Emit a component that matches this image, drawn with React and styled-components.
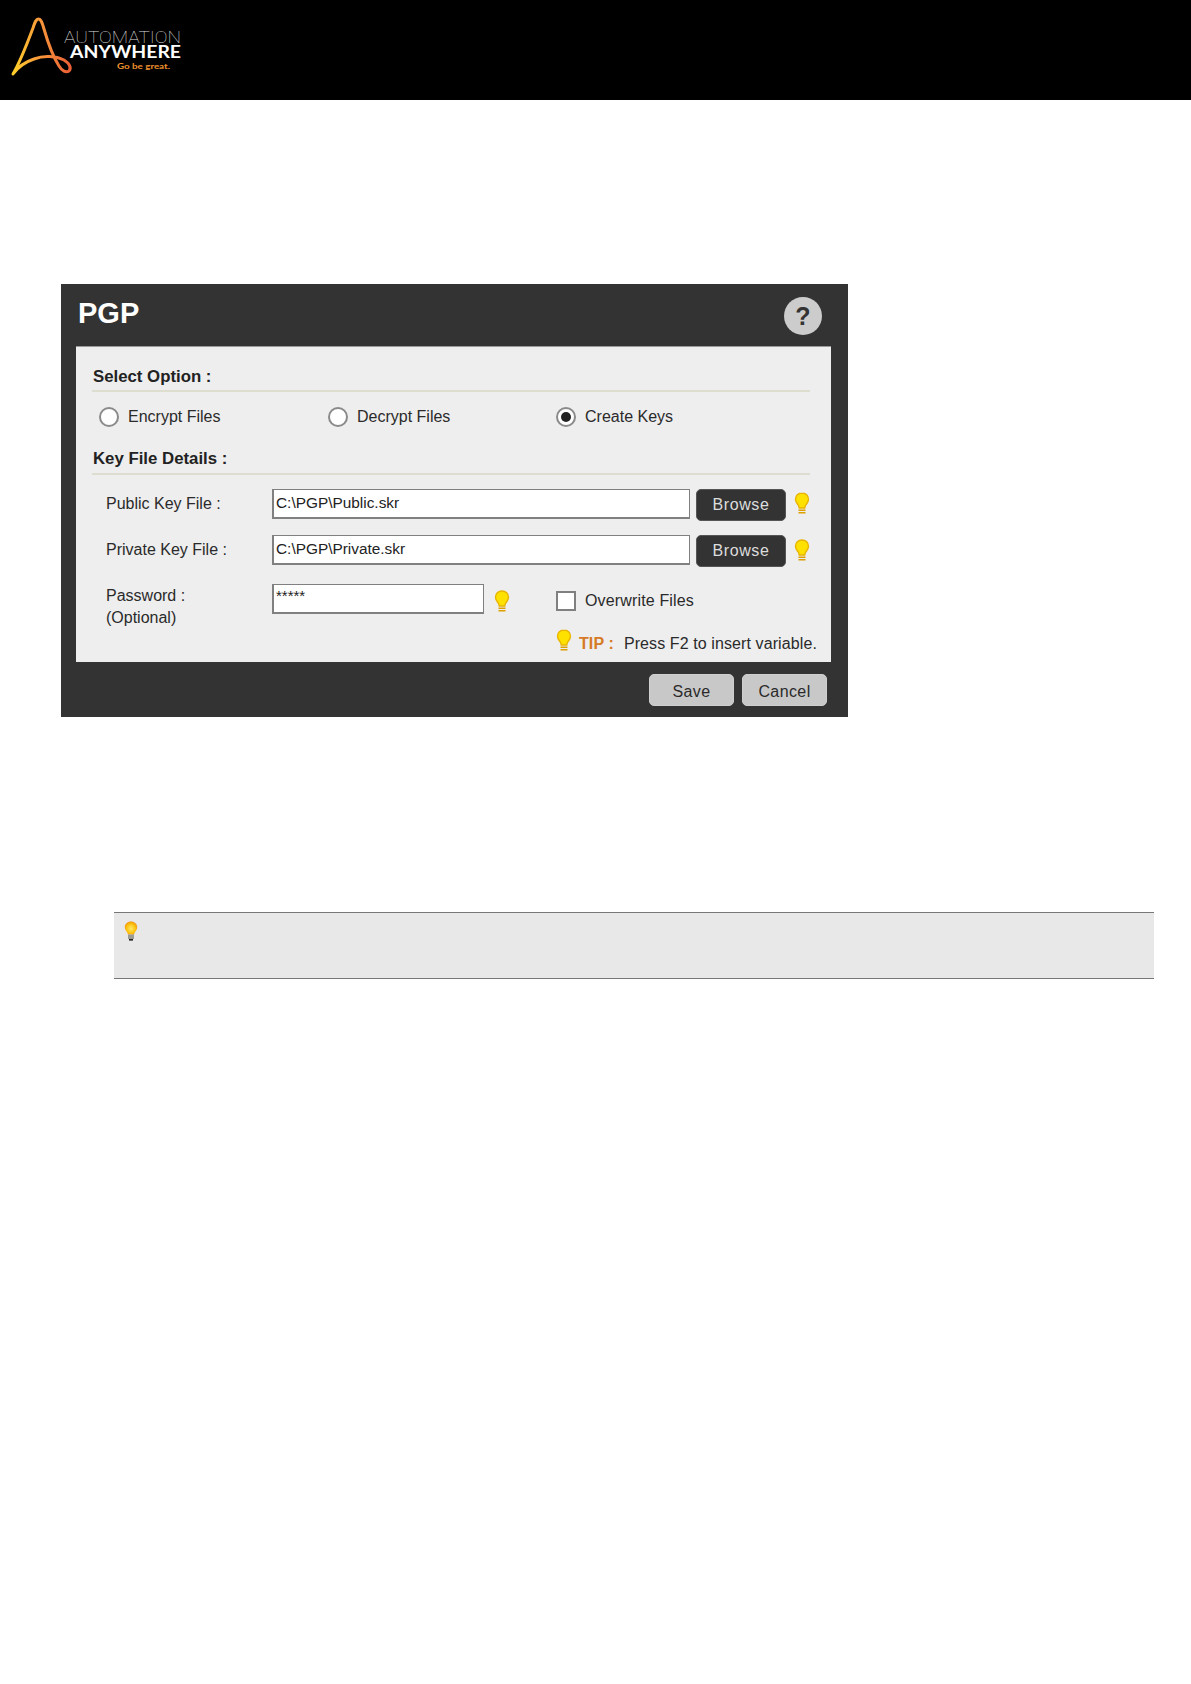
import React from 'react';
import styled, { createGlobalStyle } from 'styled-components';

const GlobalStyle = createGlobalStyle`
  body {
    margin: 0;
    background: #ffffff;
    font-family: 'Liberation Sans', Arial, sans-serif;
  }
`;

const Page = styled.div`
  min-height: 1684px;
`;

const TopBar = styled.header`
  height: 100px;
  background: #000000;
`;

const Logo = styled.svg`
  display: block;
`;

// dialog screenshot
const Dialog = styled.section`
  width: 787px;
  height: 433px;
  margin: 184px 0 0 61px;
  background: #333333;
  display: flex;
  flex-direction: column;
`;

const TitleBar = styled.div`
  height: 62px;
  flex: none;
  display: flex;
  justify-content: space-between;
  padding: 11px 26px 0 17px;
  box-sizing: border-box;
`;

const Title = styled.h1`
  margin: 0;
  font-size: 29px;
  line-height: 36px;
  font-weight: bold;
  color: #ffffff;
`;

const HelpButton = styled.div`
  width: 38px;
  height: 38px;
  margin-top: 2px;
  border-radius: 50%;
  background: #cccccc;
  color: #333333;
  font-size: 25px;
  font-weight: bold;
  line-height: 38px;
  text-align: center;
`;

const Panel = styled.div`
  width: 755px;
  height: 316px;
  flex: none;
  margin-left: 15px;
  padding: 20px 21px 0 16px;
  box-sizing: border-box;
  background: #eeeeee;
  border-top: 1px solid #999999;
  color: #2a2a2a;
  font-size: 16px;
`;

const SectionTitle = styled.h2`
  margin: ${(props) => props.$top || 0}px 0 0;
  padding: 0 0 ${(props) => props.$bottom}px 1px;
  font-size: 16.800px;
  line-height: 20px;
  font-weight: bold;
  color: #222222;
  border-bottom: 2px solid #deded0;
`;

const OptionRow = styled.div`
  display: grid;
  grid-template-columns: 229px 228px 1fr;
  padding-left: 7px;
  margin-top: 15px;
`;

const Option = styled.label`
  display: flex;
  align-items: center;
  gap: 9px;
  height: 20px;
  white-space: nowrap;
`;

const Radio = styled.span`
  width: 20px;
  height: 20px;
  box-sizing: border-box;
  border-radius: 50%;
  border: 2px solid #8a8a8a;
  background: #ffffff;
  display: flex;
  align-items: center;
  justify-content: center;
  flex: none;

  &::after {
    content: '';
    display: ${(props) => (props.$checked ? 'block' : 'none')};
    width: 10px;
    height: 10px;
    border-radius: 50%;
    background: #222222;
  }
`;

const FileRow = styled.div`
  display: flex;
  align-items: flex-start;
  padding-left: 14px;
  margin-top: ${(props) => props.$top}px;
`;

const Label = styled.div`
  width: 166px;
  flex: none;
  margin-top: ${(props) => props.$offset}px;
  line-height: 22px;
`;

const Field = styled.div`
  width: ${(props) => props.$width}px;
  height: 30px;
  flex: none;
  box-sizing: border-box;
  padding: ${(props) => props.$pad}px 2px 0;
  background: #ffffff;
  border: 2px solid #808080;
  border-right-width: 1px;
  border-top-width: 1px;
  font-size: ${(props) => props.$size}px;
  line-height: 20px;
  color: #222222;
`;

const BrowseButton = styled.button`
  width: 90px;
  height: 32px;
  flex: none;
  margin-left: 6px;
  padding: 0;
  border: 1px solid #555555;
  border-radius: 5px;
  background: #333333;
  color: #dddddd;
  font-family: inherit;
  font-size: 16px;
  letter-spacing: 0.6px;
`;

const Bulb = styled.svg`
  display: block;
  flex: none;
  margin: ${(props) => props.$margin || '0'};
`;

const CheckOption = styled(Option)`
  margin: 7px 0 0 46px;
  letter-spacing: 0.15px;
`;

const CheckBox = styled.span`
  width: 20px;
  height: 20px;
  box-sizing: border-box;
  background: #ffffff;
  border: 2px solid #808080;
  flex: none;
`;

const TipRow = styled.div`
  display: flex;
  align-items: center;
  height: 20px;
  margin: 5px 0 0 464px;
  white-space: nowrap;
  letter-spacing: 0.1px;
`;

const TipLabel = styled.span`
  margin: 0 10px 0 7px;
  font-weight: bold;
  color: #d67a26;
`;

const Footer = styled.div`
  flex: 1;
  display: flex;
  justify-content: flex-end;
  gap: 8px;
  padding: 12px 21px 0 0;
`;

const FooterButton = styled.button`
  width: 85px;
  height: 32px;
  padding: 4px 0 0;
  border: 1px solid #cfcfcf;
  border-radius: 5px;
  background: #c8c8c8;
  color: #2a2a2a;
  font-family: inherit;
  font-size: 16px;
  letter-spacing: 0.4px;
`;

const TipBox = styled.aside`
  width: 1040px;
  height: 67px;
  margin: 195px 0 0 114px;
  padding: 8px 0 0 10px;
  box-sizing: border-box;
  background: #e8e8e8;
  border-top: 1px solid #777777;
  border-bottom: 1px solid #777777;
`;

const YellowBulb = ({ margin }) => (
  <Bulb $margin={margin} width="16" height="22" viewBox="0 0 16 22">
    <path
      d="M8 1C4.2 1 1.5 3.7 1.5 7.2c0 2.8 2 4.5 3 6.3.4.8.6 1.6.7 2.5h5.6c.1-.9.3-1.7.7-2.5 1-1.8 3-3.5 3-6.3C14.500 3.700 11.800 1 8 1z"
      fill="#ffe100"
      stroke="#e8b400"
      strokeWidth="1.400"
    />
    <rect x="4.500" y="17.500" width="7" height="1.500" fill="#dca000" />
    <rect x="4.500" y="20" width="7" height="1.500" fill="#dca000" />
  </Bulb>
);

const GlossyBulb = () => (
  <svg width="14" height="20" viewBox="0 0 14 20" style={{ display: 'block' }}>
    <defs>
      <radialGradient id="glossBulb" cx="50%" cy="55%" r="60%">
        <stop offset="0%" stopColor="#ffe96a" />
        <stop offset="60%" stopColor="#fdc20f" />
        <stop offset="100%" stopColor="#ec8a12" />
      </radialGradient>
    </defs>
    <path d="M7 .5C3.400.5.800 3 .800 6.300c0 2.600 1.900 3.900 2.700 5.800.2.500.3 1 .4 1.400h6.200c.1-.4.200-.9.400-1.400.8-1.900 2.700-3.200 2.700-5.800C13.200 3 10.600.500 7 .500z" fill="url(#glossBulb)" />
    <rect x="4" y="13.500" width="6" height="4.500" fill="#9c9c94" />
    <rect x="5" y="18" width="4" height="1.600" fill="#222222" />
  </svg>
);

const App = () => (
  <Page>
    <GlobalStyle />
    <TopBar>
      <Logo width="200" height="100" viewBox="0 0 200 100">
        <defs>
          <linearGradient id="logoSwoosh" x1="0" y1="0" x2="1" y2="0">
            <stop offset="0%" stopColor="#ffd02a" />
            <stop offset="45%" stopColor="#f8993a" />
            <stop offset="100%" stopColor="#ea5f36" />
          </linearGradient>
        </defs>
        <path
          d="M13 74C20 62 27 44 33 28C35 22 36 19 38.500 19C41 19 42 22 44 29C48 43 54 58 59 66C62 71 66 73 69 71C72 68 69 63 64 60C56 56 44 55 34 59C25 62 18 67 13 74z"
          fill="none"
          stroke="url(#logoSwoosh)"
          strokeWidth="3"
          strokeLinejoin="round"
        />
        <text x="64" y="43" fontFamily="Roboto, sans-serif" fontWeight="100" fontSize="16" fill="#dddddd" textLength="117" lengthAdjust="spacingAndGlyphs">AUTOMATION</text>
        <text x="70" y="58" fontFamily="Lato, sans-serif" fontWeight="700" fontSize="16.500" fill="#ffffff" textLength="111" lengthAdjust="spacingAndGlyphs">ANYWHERE</text>
        <text x="117" y="68.500" fontFamily="Lato, sans-serif" fontWeight="700" fontSize="8" fill="#f0922e" textLength="53" lengthAdjust="spacingAndGlyphs">Go be great.</text>
      </Logo>
    </TopBar>

    <Dialog>
      <TitleBar>
        <Title>PGP</Title>
        <HelpButton>?</HelpButton>
      </TitleBar>
      <Panel>
        <SectionTitle $bottom={3}>Select Option :</SectionTitle>
        <OptionRow>
          <Option><Radio />Encrypt Files</Option>
          <Option><Radio />Decrypt Files</Option>
          <Option><Radio $checked />Create Keys</Option>
        </OptionRow>
        <SectionTitle $top={22} $bottom={4}>Key File Details :</SectionTitle>
        <FileRow $top={14}>
          <Label $offset={4}>Public Key File :</Label>
          <Field $width={418} $size={15.400} $pad={3}>C:\PGP\Public.skr</Field>
          <BrowseButton>Browse</BrowseButton>
          <YellowBulb margin="3px 0 0 8px" />
        </FileRow>
        <FileRow $top={14}>
          <Label $offset={4}>Private Key File :</Label>
          <Field $width={418} $size={15.400} $pad={3}>C:\PGP\Private.skr</Field>
          <BrowseButton>Browse</BrowseButton>
          <YellowBulb margin="4px 0 0 8px" />
        </FileRow>
        <FileRow $top={17}>
          <Label $offset={1}>Password :<br />(Optional)</Label>
          <Field $width={212} $size={15} $pad={1}>*****</Field>
          <YellowBulb margin="6px 0 0 10px" />
          <CheckOption><CheckBox />Overwrite Files</CheckOption>
        </FileRow>
        <TipRow>
          <YellowBulb margin="-8px 0 0 0" />
          <TipLabel>TIP :</TipLabel>
          Press F2 to insert variable.
        </TipRow>
      </Panel>
      <Footer>
        <FooterButton>Save</FooterButton>
        <FooterButton>Cancel</FooterButton>
      </Footer>
    </Dialog>

    <TipBox>
      <GlossyBulb />
    </TipBox>
  </Page>
);

export default App;
